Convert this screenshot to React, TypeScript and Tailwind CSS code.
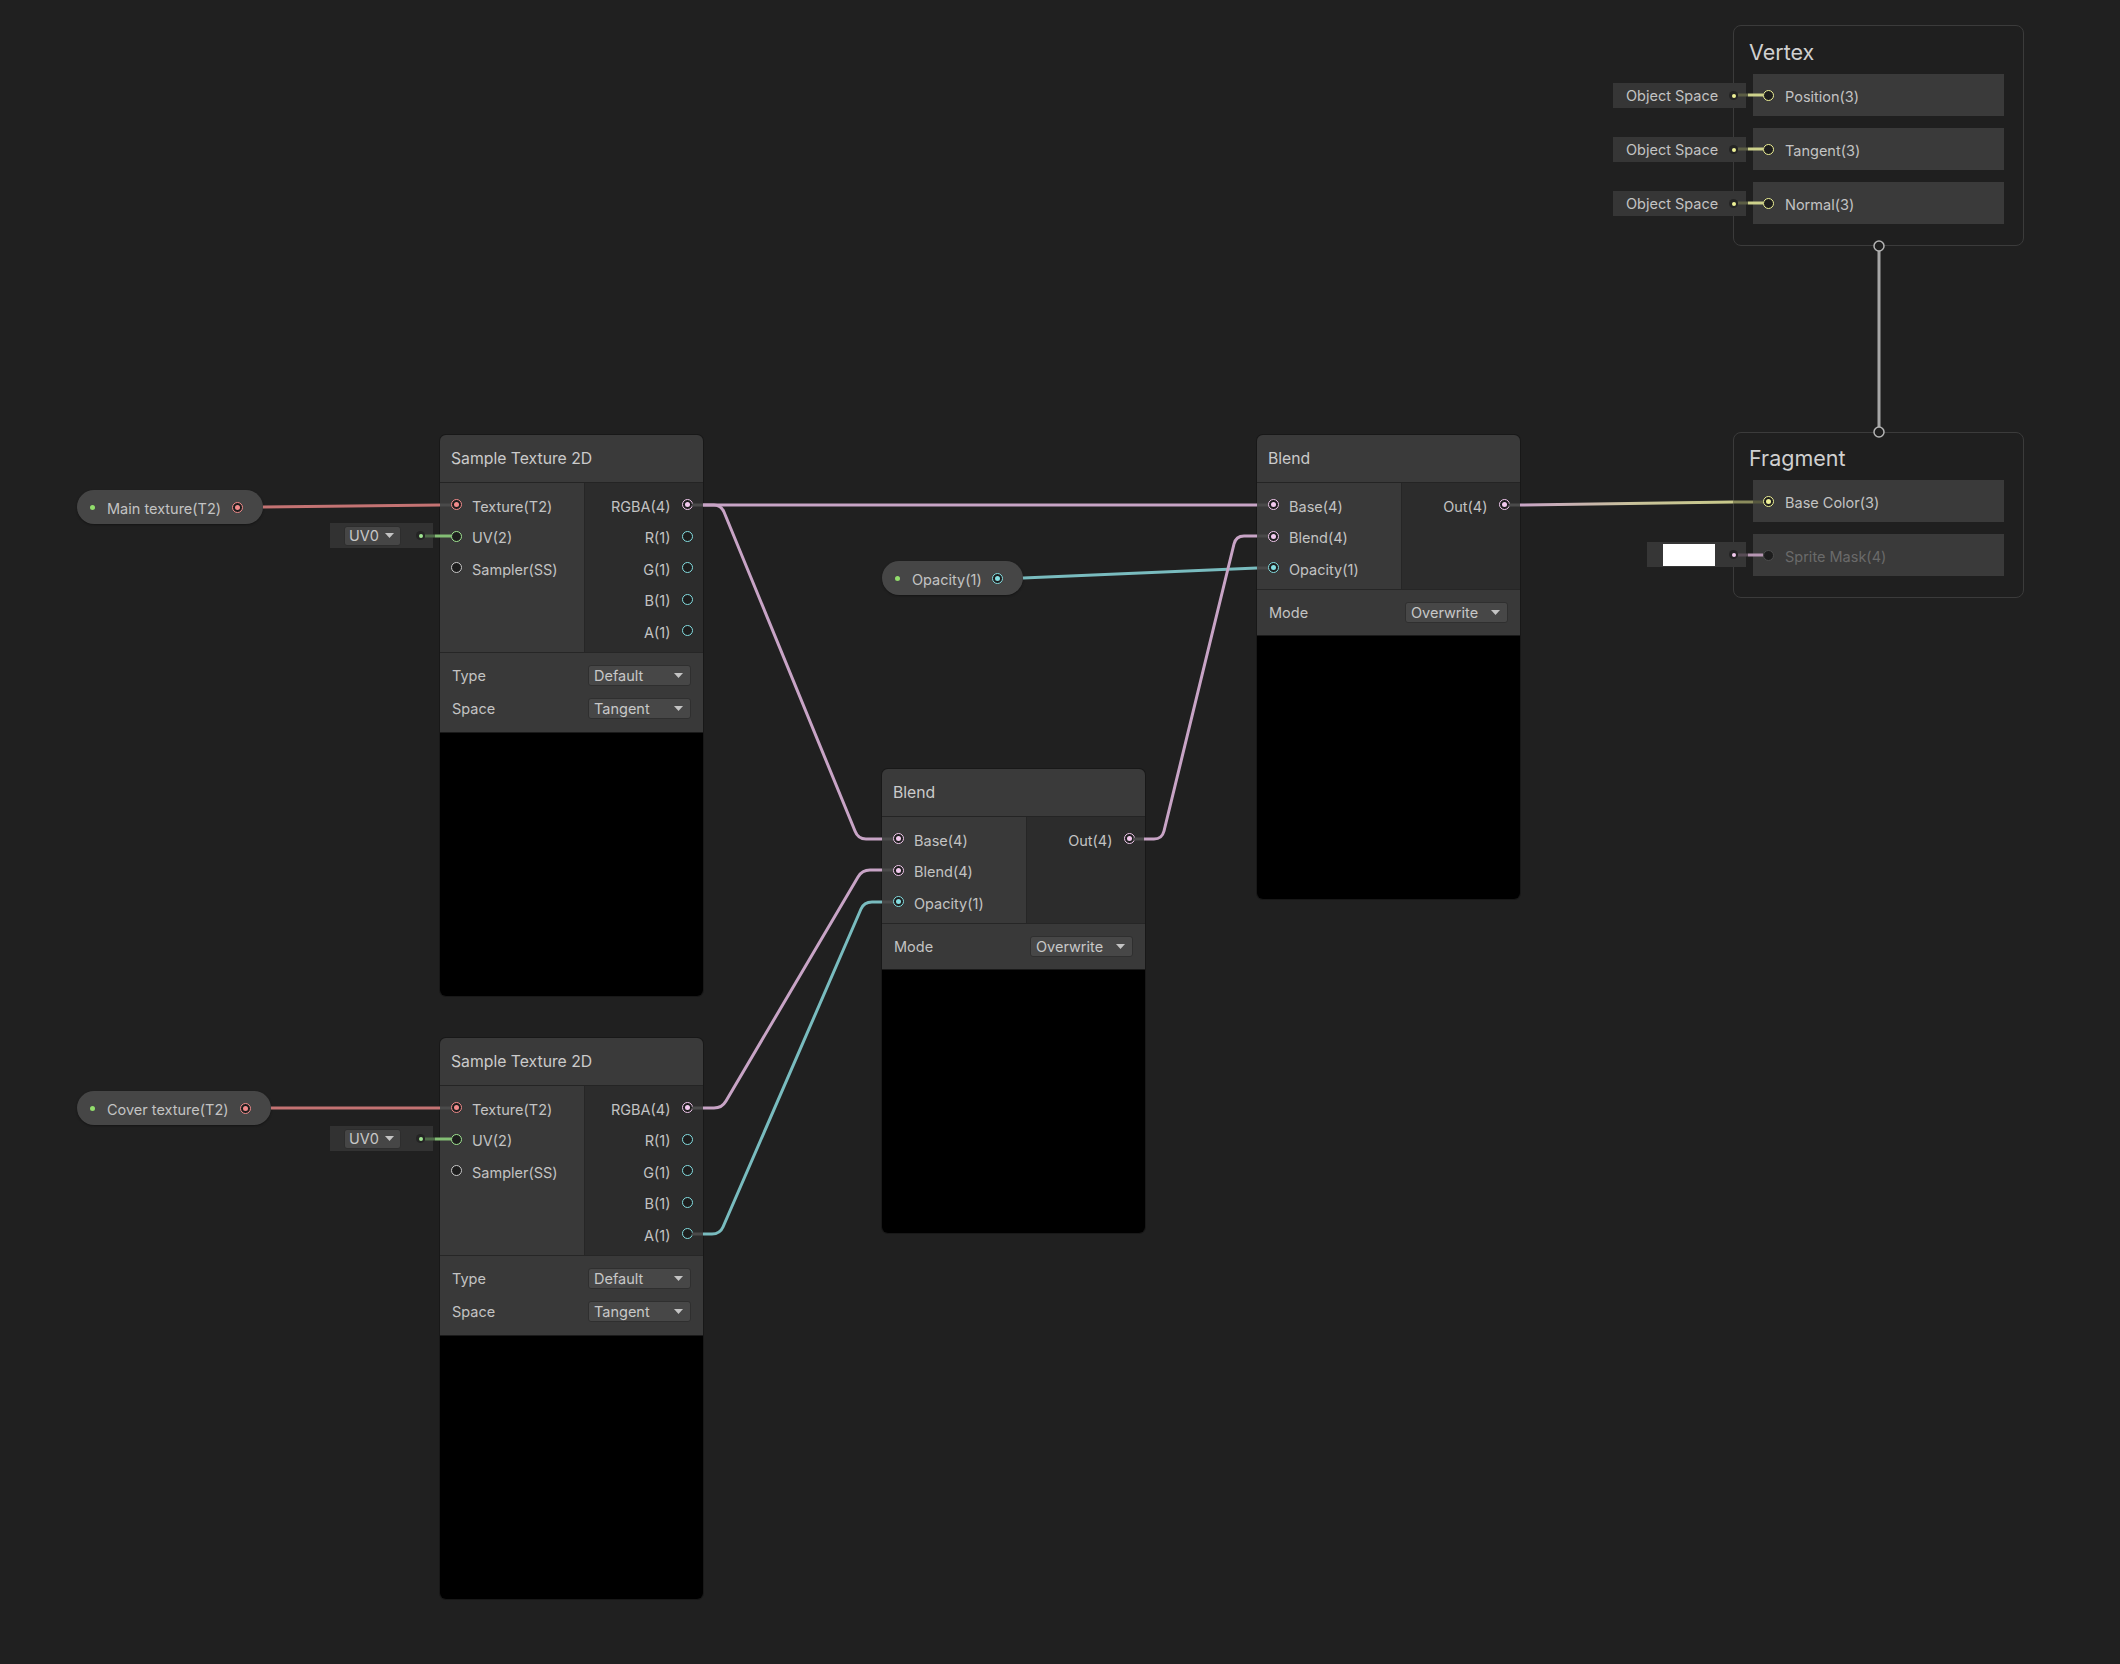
import React from 'react';

type PortColor = 'red' | 'pink' | 'cyan' | 'green' | 'yellow' | 'grey' | 'off';

const RING: Record<PortColor, string> = {
    red: 'border-[#f08b8b]',
    pink: 'border-[#f2c9ee]',
    cyan: 'border-[#84dee1]',
    green: 'border-[#a0e592]',
    yellow: 'border-[#eef196]',
    grey: 'border-[#c9c9c9]',
    off: 'border-[#4c4c4c]',
};

const DOT: Record<PortColor, string> = {
    red: 'bg-[#f08b8b]',
    pink: 'bg-[#f2c9ee]',
    cyan: 'bg-[#84dee1]',
    green: 'bg-[#a0e592]',
    yellow: 'bg-[#eef196]',
    grey: 'bg-[#c9c9c9]',
    off: 'bg-[#4c4c4c]',
};

const Port: React.FC<{ c: PortColor; on?: boolean }> = ({ c, on = false }) => (
    <span className={`flex items-center justify-center w-[11px] h-[11px] shrink-0 rounded-full border-[1.5px] bg-[#1d1d1d] ${RING[c]}`}>
        {on && <span className={`w-[5px] h-[5px] rounded-full ${DOT[c]}`} />}
    </span>
);

// little dot used by inline inputs (UV0, Object Space, colour swatch)
const InlineDot: React.FC<{ c: PortColor }> = ({ c }) => (
    <span className="flex items-center justify-center w-[9px] h-[9px] shrink-0 rounded-full bg-[#242424]">
        <span className={`w-[4px] h-[4px] rounded-full ${DOT[c]}`} />
    </span>
);

const Caret = () => (
    <svg width="9" height="5" viewBox="0 0 9 5" className="shrink-0">
        <path d="M0 0h9L4.5 5z" fill="#c4c4c4" />
    </svg>
);

const Dropdown: React.FC<{ label: string }> = ({ label }) => (
    <div className="flex items-center justify-between w-[103px] h-[21px] pl-[5px] pr-[7px] rounded-[3px] bg-[#474747] border border-[#2f2f2f] text-[14.5px] text-[#c8c8c8]">
        <span>{label}</span>
        <Caret />
    </div>
);

const InRow: React.FC<{ label: string; c: PortColor; on?: boolean }> = ({ label, c, on }) => (
    <div className="flex h-[31.5px] items-center gap-[10.5px] pl-[10.5px]">
        <Port c={c} on={on} />
        <span className="translate-y-[2px]">{label}</span>
    </div>
);

const OutRow: React.FC<{ label: string; c: PortColor; on?: boolean }> = ({ label, c, on }) => (
    <div className="flex h-[31.5px] items-center justify-end gap-[11px] pr-[10.5px]">
        <span className="translate-y-[2px]">{label}</span>
        <Port c={c} on={on} />
    </div>
);

const Header: React.FC<{ title: string }> = ({ title }) => (
    <div className="flex h-[48px] items-center pl-[11px] bg-[#3a3a3a] border-b border-[#242424] text-[15.75px] text-[#cbcbcb]">
        {title}
    </div>
);

const SampleTexture: React.FC<{ pos: string }> = ({ pos }) => (
    <div className={`absolute left-[440px] w-[263px] rounded-[6px] overflow-hidden shadow-[0_0_0_1px_#181818] ${pos}`}>
        <Header title="Sample Texture 2D" />
        <div className="flex h-[169px]">
            <div className="w-[144px] bg-[#393939] pt-[6px]">
                <InRow label="Texture(T2)" c="red" on />
                <InRow label="UV(2)" c="green" />
                <InRow label="Sampler(SS)" c="grey" />
            </div>
            <div className="flex-1 bg-[#2c2c2c] border-l border-[#262626] pt-[6px]">
                <OutRow label="RGBA(4)" c="pink" on />
                <OutRow label="R(1)" c="cyan" />
                <OutRow label="G(1)" c="cyan" />
                <OutRow label="B(1)" c="cyan" />
                <OutRow label="A(1)" c="cyan" />
            </div>
        </div>
        <div className="flex flex-col h-[80px] gap-[12px] pt-[12px] px-[12px] bg-[#393939] border-t border-[#262626]">
            <div className="flex h-[21px] items-center justify-between">
                <span>Type</span>
                <Dropdown label="Default" />
            </div>
            <div className="flex h-[21px] items-center justify-between">
                <span>Space</span>
                <Dropdown label="Tangent" />
            </div>
        </div>
        <div className="h-[264px] bg-black border-t border-[#1a1a1a]" />
    </div>
);

const Blend: React.FC<{ pos: string }> = ({ pos }) => (
    <div className={`absolute w-[263px] rounded-[6px] overflow-hidden shadow-[0_0_0_1px_#181818] ${pos}`}>
        <Header title="Blend" />
        <div className="flex h-[106px]">
            <div className="w-[144px] bg-[#393939] pt-[6px]">
                <InRow label="Base(4)" c="pink" on />
                <InRow label="Blend(4)" c="pink" on />
                <InRow label="Opacity(1)" c="cyan" on />
            </div>
            <div className="flex-1 bg-[#2c2c2c] border-l border-[#262626] pt-[6px]">
                <OutRow label="Out(4)" c="pink" on />
            </div>
        </div>
        <div className="flex h-[46px] items-center justify-between px-[12px] bg-[#393939] border-t border-[#262626]">
            <span>Mode</span>
            <Dropdown label="Overwrite" />
        </div>
        <div className="h-[264px] bg-black border-t border-[#1a1a1a]" />
    </div>
);

const Pill: React.FC<{ label: string; c: PortColor; pos: string }> = ({ label, c, pos }) => (
    <div className={`absolute flex h-[34px] items-center pl-[13px] pr-[20.5px] rounded-full bg-[#464646] shadow-[0_1px_2px_#151515] ${pos}`}>
        <span className="w-[5px] h-[5px] rounded-full bg-[#92dd6c]" />
        <span className="ml-[12px] translate-y-[2px]">{label}</span>
        <span className="ml-auto">
            <Port c={c} on />
        </span>
    </div>
);

const UvBox: React.FC<{ pos: string }> = ({ pos }) => (
    <div className={`absolute left-[330px] flex w-[103px] h-[25px] items-center pl-[14px] pr-[8px] bg-[#323232] ${pos}`}>
        <div className="flex items-center gap-[6px] h-[20px] pl-[4px] pr-[6px] rounded-[3px] bg-[#464646] border border-[#2d2d2d] text-[14.5px] text-[#c8c8c8]">
            <span>UV0</span>
            <Caret />
        </div>
        <span className="ml-auto">
            <InlineDot c="green" />
        </span>
    </div>
);

const SpaceBox: React.FC<{ pos: string }> = ({ pos }) => (
    <div className={`absolute left-[1613px] flex w-[133px] h-[25px] items-center justify-between pl-[13px] pr-[8px] bg-[#363636] ${pos}`}>
        <span>Object Space</span>
        <InlineDot c="yellow" />
    </div>
);

const StackRow: React.FC<{ label: string; c: PortColor; on?: boolean; dim?: boolean }> = ({ label, c, on, dim }) => (
    <div className="flex h-[42px] items-center gap-[11.5px] pl-[9.5px] bg-[#3a3a3a]">
        <Port c={c} on={on} />
        <span className={`translate-y-[2px] ${dim ? 'text-[#6a6a6a]' : ''}`}>{label}</span>
    </div>
);

const PINK = '#c8a4c6';
const CYAN = '#79bcbf';
const RED = '#c47373';
const GREEN = '#84bf75';
const YELLOW = '#cdd18b';
const STUB = '#4a4a4a';

const Wires = () => (
    <svg className="absolute inset-0 pointer-events-none" width="2120" height="1664" viewBox="0 0 2120 1664" fill="none" strokeWidth="3" strokeLinecap="butt">
        <defs>
            <linearGradient id="baseColor" gradientUnits="userSpaceOnUse" x1="1520" y1="0" x2="1733" y2="0">
                <stop offset="0" stopColor={PINK} />
                <stop offset="0.55" stopColor="#c9c39a" />
                <stop offset="1" stopColor="#c8c98a" />
            </linearGradient>
        </defs>

        {/* property pills */}
        <path d="M263 507 L440 505" stroke={RED} />
        <path d="M271 1108 H440" stroke={RED} />
        <path d="M1023 578 L1257 568" stroke={CYAN} />

        {/* uv inline inputs */}
        <path d="M425 536 H435" stroke="#4f6a49" />
        <path d="M435 536 H451" stroke={GREEN} />
        <path d="M425 1139 H435" stroke="#4f6a49" />
        <path d="M435 1139 H451" stroke={GREEN} />

        {/* texture -> blends */}
        <path d="M703 505 H1257" stroke={PINK} />
        <path d="M703 505 H714 Q721 505 724 512 L855 831 Q858 839 866 839 H882" stroke={PINK} />
        <path d="M703 1108 H714 Q722 1108 726 1101 L858 877 Q862 870 870 870 H882" stroke={PINK} />
        <path d="M703 1234 H712 Q720 1234 723 1227 L861 909 Q864 902 872 902 H882" stroke={CYAN} />
        <path d="M1144 839 H1154 Q1162 839 1164 831 L1234 544 Q1236 536 1244 536 H1257" stroke={PINK} />

        {/* blend -> fragment */}
        <path d="M1520 505 L1733 502" stroke="url(#baseColor)" />
        <path d="M1733 502 H1753" stroke="#8b8c5d" />
        <path d="M1753 502 H1763" stroke="#57583f" />

        {/* stubs inside nodes */}
        <g stroke={STUB}>
            <path d="M440 505 H451" />
            <path d="M692 505 H703" />
            <path d="M440 1108 H451" />
            <path d="M692 1108 H703" />
            <path d="M692 1234 H703" />
            <path d="M882 839 H893" />
            <path d="M882 870 H893" />
            <path d="M882 902 H893" />
            <path d="M1133 839 H1144" />
            <path d="M1257 505 H1268" />
            <path d="M1257 536 H1268" />
            <path d="M1257 568 H1268" />
            <path d="M1509 505 H1520" />
        </g>

        {/* vertex inline inputs */}
        {[95, 149, 203].map((y) => (
            <g key={y}>
                <path d={`M1738 ${y} H1748`} stroke="#5b5d44" />
                <path d={`M1748 ${y} H1763`} stroke={YELLOW} />
            </g>
        ))}

        {/* sprite mask swatch */}
        <path d="M1738 555 H1748" stroke="#584c56" />
        <path d="M1748 555 H1763" stroke="#b796b3" />

        {/* vertex -> fragment link */}
        <path d="M1879 251 V427" stroke="#a6a6a6" />
        <circle cx="1879" cy="246" r="5" fill="#1f1f1f" stroke="#b4b4b4" strokeWidth="1.5" />
        <circle cx="1879" cy="432" r="5" fill="#1f1f1f" stroke="#b4b4b4" strokeWidth="1.5" />
    </svg>
);

export default function App() {
    return (
        <div className="relative w-[2120px] h-[1664px] overflow-hidden bg-[#202020] font-['Inter','Noto_Sans',sans-serif] text-[14.5px] text-[#c3c3c3]">
            <Pill label="Main texture(T2)" c="red" pos="left-[77px] top-[490px] w-[186px]" />
            <Pill label="Cover texture(T2)" c="red" pos="left-[77px] top-[1091px] w-[194px]" />
            <Pill label="Opacity(1)" c="cyan" pos="left-[882px] top-[561px] w-[141px]" />

            <UvBox pos="top-[523px]" />
            <UvBox pos="top-[1126px]" />

            <SampleTexture pos="top-[435px]" />
            <SampleTexture pos="top-[1038px]" />

            <Blend pos="left-[882px] top-[769px]" />
            <Blend pos="left-[1257px] top-[435px]" />

            {/* master stack */}
            <div className="absolute left-[1733px] top-[25px] w-[291px] pb-[21px] rounded-[8px] border border-[#3b3b3b] bg-[#1f1f1f]">
                <div className="flex h-[48px] items-center pt-[4px] pl-[15px] text-[21.5px] text-[#d0d0d0]">Vertex</div>
                <div className="flex flex-col gap-[12px] px-[19px]">
                    <StackRow label="Position(3)" c="yellow" />
                    <StackRow label="Tangent(3)" c="yellow" />
                    <StackRow label="Normal(3)" c="yellow" />
                </div>
            </div>
            <SpaceBox pos="top-[83px]" />
            <SpaceBox pos="top-[137px]" />
            <SpaceBox pos="top-[191px]" />

            <div className="absolute left-[1733px] top-[432px] w-[291px] pb-[21px] rounded-[8px] border border-[#3b3b3b] bg-[#1f1f1f]">
                <div className="flex h-[47px] items-center pt-[3px] pl-[15px] text-[21.5px] text-[#d0d0d0]">Fragment</div>
                <div className="flex flex-col gap-[12px] px-[19px]">
                    <StackRow label="Base Color(3)" c="yellow" on />
                    <StackRow label="Sprite Mask(4)" c="off" dim />
                </div>
            </div>
            <div className="absolute left-[1647px] top-[542px] flex w-[99px] h-[25px] items-center pl-[16px] pr-[8px] bg-[#363636]">
                <span className="w-[52px] h-[22px] bg-white" />
                <span className="ml-auto">
                    <InlineDot c="pink" />
                </span>
            </div>

            <Wires />
        </div>
    );
}
